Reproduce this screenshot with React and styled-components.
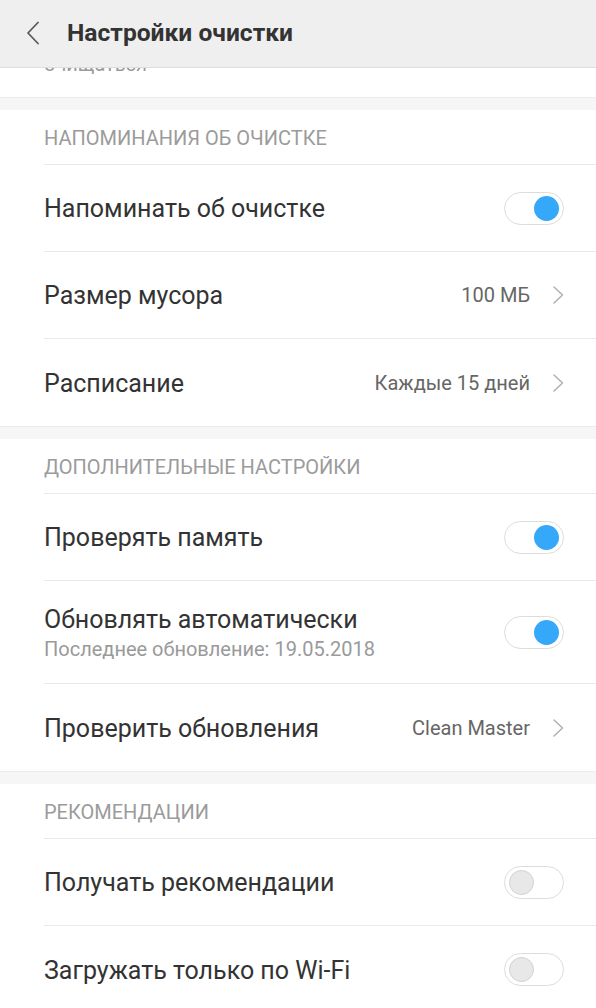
import React from "react";
import styled, { createGlobalStyle } from "styled-components";

const GlobalStyle = createGlobalStyle`
  html, body {
    margin: 0;
    padding: 0;
    background: #ffffff;
  }
  body {
    font-family: Roboto, "Noto Sans", sans-serif;
    -webkit-font-smoothing: antialiased;
  }
`;

const sections = [
  {
    title: "Напоминания об очистке",
    rows: [
      { label: "Напоминать об очистке", toggle: true },
      { label: "Размер мусора", value: "100 МБ" },
      { label: "Расписание", value: "Каждые 15 дней" },
    ],
  },
  {
    title: "Дополнительные настройки",
    rows: [
      { label: "Проверять память", toggle: true },
      { label: "Обновлять автоматически", hint: "Последнее обновление: 19.05.2018", toggle: true },
      { label: "Проверить обновления", value: "Clean Master" },
    ],
  },
  {
    title: "Рекомендации",
    rows: [
      { label: "Получать рекомендации", toggle: false },
      { label: "Загружать только по Wi-Fi", toggle: false },
    ],
  },
];

function BackIcon() {
  return (
    <svg width="16" height="24" viewBox="0 0 16 24" fill="none">
      <path d="M13 1.5 L3 12 L13 22.5" stroke="#5a5a5a" strokeWidth="1.8" strokeLinecap="round" strokeLinejoin="round" />
    </svg>
  );
}

function Chevron() {
  return (
    <svg width="12" height="18" viewBox="0 0 12 18" fill="none">
      <path d="M2 1 L10.5 9 L2 17" stroke="#b0b0b0" strokeWidth="1.5" strokeLinecap="round" strokeLinejoin="round" />
    </svg>
  );
}

export default function App() {
  return (
    <>
      <GlobalStyle />
      <Screen>
        <Header>
          <BackButton><BackIcon /></BackButton>
          <Title>Настройки очистки</Title>
        </Header>

        {/* previous group, scrolled up under the header */}
        <TailRow>
          <TailText>очищаться</TailText>
        </TailRow>

        {sections.map((section) => (
          <Section key={section.title}>
            <Gap />
            <SectionTitle>{section.title}</SectionTitle>
            {section.rows.map((row) => (
              <Row key={row.label} $tall={!!row.hint}>
                <Texts>
                  <Label>{row.label}</Label>
                  {row.hint && <Hint>{row.hint}</Hint>}
                </Texts>
                {row.value !== undefined ? (
                  <Value>
                    {row.value}
                    <Chevron />
                  </Value>
                ) : (
                  <Switch $on={row.toggle}>
                    <Knob $on={row.toggle} />
                  </Switch>
                )}
              </Row>
            ))}
          </Section>
        ))}
      </Screen>
    </>
  );
}

// =========================== STYLES ============================= //

const Screen = styled.div`
  width: 596px;
  height: 1008px;
  overflow: hidden;
  background: #fff;
  display: flex;
  flex-direction: column;
`;

const Header = styled.div`
  flex: none;
  height: 68px;
  box-sizing: border-box;
  background: #efeff0;
  border-bottom: 1px solid #dedede;
  display: flex;
  align-items: center;
  padding-left: 25px;
  position: relative;
  z-index: 1;
`;

const BackButton = styled.div`
  width: 18px;
  height: 24px;
  display: flex;
  align-items: center;
  margin-top: -2px;
`;

const Title = styled.div`
  margin-left: 24px;
  font-size: 24.6px;
  font-weight: 700;
  color: #333;
  margin-top: -2px;
`;

const TailRow = styled.div`
  flex: none;
  height: 29px;
  overflow: hidden;
  padding-left: 44px;
`;

const TailText = styled.div`
  margin-top: -14px;
  font-size: 20px;
  line-height: 20px;
  color: #9a9a9a;
`;

const Section = styled.div`
  flex: none;
`;

const Gap = styled.div`
  height: 12px;
  background: #f6f6f6;
  border-top: 1px solid #ececec;
`;

const SectionTitle = styled.div`
  height: 55px;
  box-sizing: border-box;
  margin-left: 44px;
  padding-top: 2px;
  border-bottom: 1px solid #e9e9e9;
  display: flex;
  align-items: center;
  text-transform: uppercase;
  font-size: 20px;
  color: #9b9b9b;
`;

const Row = styled.div`
  height: ${(p) => (p.$tall ? 103 : 87)}px;
  box-sizing: border-box;
  margin-left: 44px;
  padding-right: 32px;
  border-bottom: 1px solid #e9e9e9;
  display: flex;
  align-items: center;
  justify-content: space-between;

  &:last-child {
    border-bottom: none;
  }
`;

const Texts = styled.div`
  display: flex;
  flex-direction: column;
  gap: 3px;
  padding-top: 1px;
`;

const Label = styled.div`
  font-size: 25px;
  color: #333;
`;

const Hint = styled.div`
  font-size: 20px;
  color: #9a9a9a;
`;

const Value = styled.div`
  display: flex;
  align-items: center;
  gap: 22px;
  font-size: 20px;
  color: #666;
`;

const Switch = styled.div`
  width: 60px;
  height: 33px;
  box-sizing: border-box;
  border: 1px solid #dcdcdc;
  border-radius: 17px;
  background: #fff;
  display: flex;
  align-items: center;
  justify-content: ${(p) => (p.$on ? "flex-end" : "flex-start")};
  padding: 0 4px;
`;

const Knob = styled.div`
  width: 25px;
  height: 25px;
  box-sizing: border-box;
  border-radius: 50%;
  background: ${(p) => (p.$on ? "#35a8fa" : "#e8e8e8")};
  border: ${(p) => (p.$on ? "none" : "1px solid #d2d2d2")};
`;
